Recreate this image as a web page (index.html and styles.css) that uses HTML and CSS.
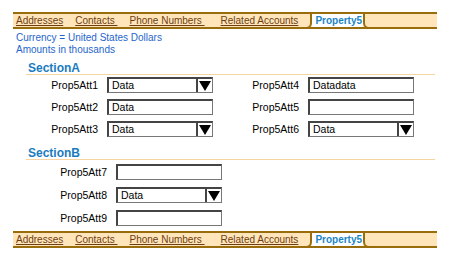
FILE: index.html
```html
<!DOCTYPE html>
<html lang="en">
<head>
    <meta charset="UTF-8">
    <title>Property5</title>
    <link rel="stylesheet" href="styles.css">
</head>
<body>
    <div class="page">
        <div class="tabs">
            <a class="tab" href="#">Addresses</a>
            <a class="tab" href="#">Contacts&nbsp;</a>
            <a class="tab" href="#">Phone Numbers&nbsp;</a>
            <a class="tab" href="#">Related Accounts</a>
            <span class="tab-active">Property5</span>
        </div>

        <div class="info">
            Currency = United States Dollars<br>
            Amounts in thousands
        </div>

        <div class="section">
            <h2>SectionA</h2>
            <div class="grid grid-a">
                <label>Prop5Att1</label>
                <div class="field select"><span class="val">Data</span><span class="arrow"></span></div>
                <label>Prop5Att4</label>
                <div class="field">Datadata</div>

                <label>Prop5Att2</label>
                <div class="field">Data</div>
                <label>Prop5Att5</label>
                <div class="field"></div>

                <label>Prop5Att3</label>
                <div class="field select"><span class="val">Data</span><span class="arrow"></span></div>
                <label>Prop5Att6</label>
                <div class="field select"><span class="val">Data</span><span class="arrow"></span></div>
            </div>
        </div>

        <div class="section">
            <h2>SectionB</h2>
            <div class="grid grid-b">
                <label>Prop5Att7</label>
                <div class="field"></div>

                <label>Prop5Att8</label>
                <div class="field select"><span class="val">Data</span><span class="arrow"></span></div>

                <label>Prop5Att9</label>
                <div class="field"></div>
            </div>
        </div>

        <div class="tabs tabs-bottom">
            <a class="tab" href="#">Addresses</a>
            <a class="tab" href="#">Contacts&nbsp;</a>
            <a class="tab" href="#">Phone Numbers&nbsp;</a>
            <a class="tab" href="#">Related Accounts</a>
            <span class="tab-active">Property5</span>
        </div>
    </div>
</body>
</html>
```

FILE: styles.css
```css
body {
    margin: 0;
    font-family: "Liberation Sans", Arial, sans-serif;
    font-size: 10px;
    color: #000;
    background: #fff;
}
.page {
    width: 424px;
    padding: 12px 0 0 13px;
}
.tabs {
    display: flex;
    align-items: center;
    height: 13px;
    background: #ffe5b9;
    border-top: 2px solid #9a6d0c;
    border-bottom: 2px solid #9a6d0c;
    padding-left: 3px;
}
.tab {
    color: #6e3e12;
    text-decoration: underline;
    margin-right: 12px;
    line-height: 13px;
    white-space: nowrap;
}
.tab:nth-child(4) { margin-left: 4px; }
.tab-active {
    position: relative;
    align-self: stretch;
    margin-left: 2px;
    padding: 0 1px 0 3px;
    background: #fff;
    color: #1a86c8;
    font-weight: bold;
    line-height: 13px;
}
.tab-active::before,
.tab-active::after {
    content: "";
    position: absolute;
    top: 0;
    bottom: -2px;
    width: 5px;
    border-bottom: 2px solid #9a6d0c;
}
.tab-active::before {
    left: -7px;
    border-right: 2px solid #9a6d0c;
    border-bottom-right-radius: 6px;
}
.tab-active::after {
    right: -7px;
    border-left: 2px solid #9a6d0c;
    border-bottom-left-radius: 6px;
}
.info {
    margin-top: 3px;
    padding-left: 3px;
    color: #1f66cc;
    line-height: 12px;
}
.section {
    margin-left: 13px;
    width: 409px;
}
.section h2 {
    margin: 6px 0 0;
    padding-left: 2px;
    font-size: 12px;
    line-height: 12px;
    color: #1a7cc0;
    border-bottom: 1px solid #f5d6a2;
}
.section + .section h2 {
    margin-top: 10px;
}
.grid {
    display: grid;
    column-gap: 9px;
    row-gap: 6px;
    margin-top: 2px;
    align-items: center;
}
.grid-a {
    grid-template-columns: 72px 106px 77px 106px;
}
.grid-b {
    grid-template-columns: 81px 106px;
    row-gap: 7px;
    margin-top: 4px;
}
.grid label {
    text-align: right;
    font-size: 10.5px;
}
.field {
    box-sizing: border-box;
    height: 16px;
    border-style: solid;
    border-width: 2px 1px 1px 2px;
    border-color: #444 #777 #777 #444;
    padding: 0 3px;
    line-height: 13px;
    font-size: 10.5px;
    background: #fff;
}
.select {
    display: flex;
    padding-right: 0;
}
.select .val {
    flex: 1;
}
.arrow {
    width: 14px;
    border-left: 2px solid #444;
    display: flex;
    align-items: center;
    justify-content: center;
}
.arrow::after {
    content: "";
    border-left: 6px solid transparent;
    border-right: 6px solid transparent;
    border-top: 10px solid #000;
}
.tabs-bottom {
    margin-top: 5px;
}
```
